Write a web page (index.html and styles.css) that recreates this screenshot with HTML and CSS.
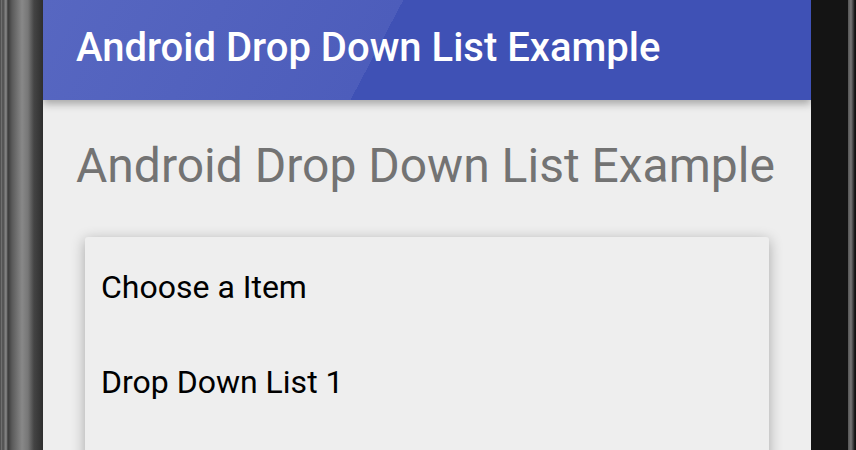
FILE: index.html
```html
<!DOCTYPE html>
<html lang="en">
<head>
    <meta charset="UTF-8">
    <meta name="viewport" content="width=device-width, initial-scale=1.0">
    <title>Android Drop Down List Example</title>
    <link rel="stylesheet" href="styles.css">
</head>
<body>

<div class="phone">
    <div class="bezel-left"></div>

    <div class="screen">
        <div class="toolbar">
            <h1 class="toolbar-title">Android Drop Down List Example</h1>
        </div>

        <h2 class="heading">Android Drop Down List Example</h2>

        <!-- Open spinner popup -->
        <div class="dropdown">
            <div class="dropdown-item">Choose a Item</div>
            <div class="dropdown-item">Drop Down List 1</div>
        </div>
    </div>

    <div class="bezel-right"></div>
</div>

</body>
</html>
```

FILE: styles.css
```css
html, body {
    margin: 0;
    padding: 0;
    height: 450px;
    overflow: hidden;
}
body {
    font-family: Roboto, 'Noto Sans', sans-serif;
    background: #111;
}
.phone {
    display: flex;
    height: 450px;
}
.bezel-left {
    width: 43px;
    flex-shrink: 0;
    background: linear-gradient(to right, #2a2a2a 0px, #7a7a7a 1px, #4a4a4a 3px, #8a8a8a 6px, #3a3a3a 8px, #5a5a5a 12px, #888 22px, #777 28px, #444 34px, #2e2e2e 43px);
}
.bezel-right {
    width: 45px;
    flex-shrink: 0;
    background: linear-gradient(to right, #141414 0px, #141414 37px, #555 37px, #777 40px, #444 42px, #111 44px);
}
.screen {
    width: 768px;
    flex-shrink: 0;
    background: #eeeeee;
    display: flex;
    flex-direction: column;
    overflow: hidden;
}
.toolbar {
    flex-shrink: 0;
    height: 100px;
    box-sizing: border-box;
    padding: 28px 0 0 33px;
    background: linear-gradient(117.9deg, #5767c1 0%, #4d5dbb 43.9%, #3f51b5 43.9%, #3f51b5 100%);
    box-shadow: 0 4px 8px rgba(0,0,0,0.3);
    position: relative;
    z-index: 1;
}
.toolbar-title {
    margin: 0;
    color: white;
    font-size: 40px;
    line-height: 40px;
    font-weight: 500;
    white-space: nowrap;
}
.heading {
    flex-shrink: 0;
    margin: 38px 0 0 33px;
    color: #737373;
    font-size: 48px;
    line-height: 56px;
    font-weight: normal;
    white-space: nowrap;
}
.dropdown {
    flex-shrink: 0;
    margin: 43px 42px 0 42px;
    padding-top: 3px;
    background: #eeeeee;
    border-radius: 3px;
    box-shadow: 0 3px 14px rgba(0,0,0,0.3);
    height: 260px;
}
.dropdown-item {
    padding: 28px 16px;
    font-size: 32px;
    line-height: 39px;
    color: #000;
}
```
